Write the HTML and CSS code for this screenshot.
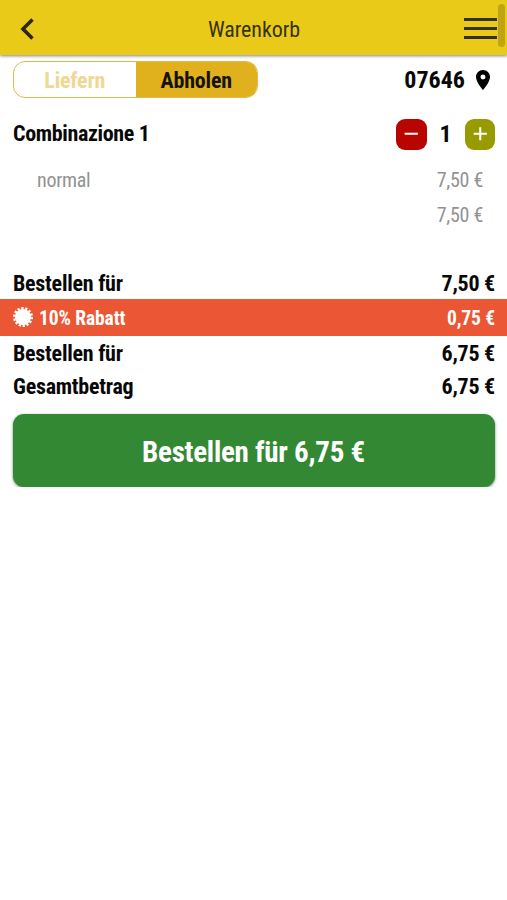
FILE: index.html
```
<!DOCTYPE html>
<html lang="de">
<head>
  <meta charset="UTF-8">
  <meta name="viewport" content="width=device-width, initial-scale=1.0">
  <title>Warenkorb</title>
  <link rel="stylesheet" href="styles.css">
</head>
<body>
  <header class="header">
    <svg class="back" viewBox="0 0 14 22"><path d="M12.5 1.5 L3 11 L12.5 20.5"/></svg>
    <h1>Warenkorb</h1>
    <div class="menu"><span></span><span></span><span></span></div>
    <div class="scrollbar"></div>
  </header>

  <div class="options">
    <div class="switch">
      <div class="tab">Liefern</div>
      <div class="tab active">Abholen</div>
    </div>
    <div class="location">
      <span>07646</span>
      <svg class="pin" viewBox="5 2 14 20"><path d="M12 2C8.13 2 5 5.13 5 9c0 5.25 7 13 7 13s7-7.75 7-13c0-3.87-3.13-7-7-7zm0 9.5a2.5 2.5 0 0 1 0-5 2.5 2.5 0 0 1 0 5z"/></svg>
    </div>
  </div>

  <div class="item">
    <span class="name">Combinazione 1</span>
    <div class="counter">
      <button class="minus"><svg viewBox="0 0 30 30"><path d="M8.5 14.5h13"/></svg></button>
      <span class="count">1</span>
      <button class="plus"><svg viewBox="0 0 30 30"><path d="M8.5 14.5h13M15 8v13"/></svg></button>
    </div>
  </div>
  <div class="detail"><span>normal</span><span>7,50 €</span></div>
  <div class="detail"><span></span><span>7,50 €</span></div>

  <div class="sums">
    <div class="row"><span>Bestellen für</span><span>7,50 €</span></div>
    <div class="row discount">
      <span class="label">
        <svg class="badge" viewBox="0 0 20 20"><circle cx="10" cy="10" r="8"/><circle class="teeth" cx="10" cy="10" r="8.5"/></svg>
        10% Rabatt
      </span>
      <span>0,75 €</span>
    </div>
    <div class="row subtotal"><span>Bestellen für</span><span>6,75 €</span></div>
    <div class="row"><span>Gesamtbetrag</span><span>6,75 €</span></div>
  </div>

  <button class="order">Bestellen für 6,75 €</button>
</body>
</html>
```
FILE: styles.css
```
* {
  box-sizing: border-box;
}

body {
  margin: 0;
  background: #fff;
  color: #080808;
  font-family: "Roboto Condensed", Roboto, sans-serif;
  font-stretch: 75%;
}

button {
  border: 0;
  padding: 0;
  font-family: inherit;
  font-stretch: inherit;
}

.header {
  position: relative;
  display: flex;
  align-items: center;
  justify-content: space-between;
  height: 55px;
  padding: 2px 10px 0 20px;
  background: #e9ca19;
  box-shadow: 0 1px 3px rgba(0, 0, 0, 0.5);
}

.header h1 {
  margin: 1px 0 0 10px;
  font-size: 22px;
  font-weight: 400;
  letter-spacing: -0.1px;
  color: #38320c;
}

.back {
  width: 14px;
  height: 22px;
  fill: none;
  stroke: #2c280f;
  stroke-width: 3.6;
}

.menu {
  display: flex;
  flex-direction: column;
  gap: 6px;
  width: 33px;
}

.menu span {
  height: 3px;
  background: #38300c;
}

.scrollbar {
  position: absolute;
  top: 4px;
  right: 2px;
  width: 7px;
  height: 43px;
  border-radius: 4px;
  background: #bfa516;
}

.options {
  display: flex;
  align-items: center;
  justify-content: space-between;
  padding: 6px 17px 0 13px;
}

.switch {
  display: flex;
  width: 245px;
  height: 37px;
  border: 1px solid #e2b84a;
  border-radius: 12px;
  overflow: hidden;
}

.tab {
  flex: 1;
  line-height: 37px;
  text-align: center;
  font-size: 22px;
  font-weight: 700;
  letter-spacing: -0.2px;
  color: #f0d793;
}

.tab.active {
  background: #e0b01d;
  color: #15120a;
}

.location {
  display: flex;
  align-items: center;
  gap: 11px;
  font-size: 24px;
  font-weight: 700;
}

.pin {
  width: 14px;
  height: 20px;
}

.item {
  display: flex;
  align-items: center;
  justify-content: space-between;
  height: 72px;
  padding: 0 12px 0 13px;
}

.name {
  padding-bottom: 2px;
  font-size: 22px;
  font-weight: 700;
  letter-spacing: -0.35px;
}

.counter {
  display: flex;
  align-items: center;
}

.count {
  width: 38px;
  text-align: center;
  font-size: 24px;
  font-weight: 700;
}

.counter button {
  width: 30.5px;
  height: 31px;
  border-radius: 9px;
}

.counter svg {
  display: block;
  fill: none;
  stroke: #fff;
  stroke-width: 2;
}

.minus {
  background: #b80500;
}

.plus {
  background: #989b00;
}

.detail {
  display: flex;
  align-items: center;
  justify-content: space-between;
  height: 35px;
  padding: 0 24px 0 37px;
  font-size: 20px;
  letter-spacing: -0.3px;
  color: #929292;
}

.item + .detail {
  margin-top: -8px;
}

.detail + .detail {
  padding-top: 1px;
}

.sums {
  margin-top: 35px;
}

.row {
  display: flex;
  align-items: center;
  justify-content: space-between;
  height: 32px;
  padding: 0 12px 0 13px;
  font-size: 22px;
  font-weight: 700;
  letter-spacing: -0.25px;
}

.discount {
  height: 37px;
  padding-top: 1px;
  background: #eb5635;
  color: #fff;
  font-size: 19.5px;
  letter-spacing: -0.1px;
}

.subtotal {
  height: 34px;
}

.label {
  display: flex;
  align-items: center;
  gap: 6px;
}

.badge {
  width: 20px;
  height: 20px;
  margin-top: -2px;
  fill: #fff;
}

.teeth {
  fill: none;
  stroke: #fff;
  stroke-width: 3;
  stroke-dasharray: 2.2 1.615;
}

.order {
  display: block;
  width: 482px;
  height: 73px;
  margin: 12px auto 0;
  padding-top: 2px;
  border-radius: 11px;
  background: #338834;
  box-shadow: 0 1px 3px rgba(0, 0, 0, 0.5);
  color: #fff;
  font-size: 29px;
  font-weight: 700;
  letter-spacing: -0.25px;
}
```
